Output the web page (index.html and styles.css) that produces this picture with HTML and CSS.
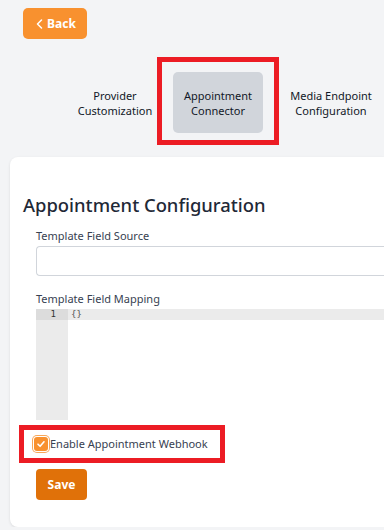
FILE: index.html
```html
<!DOCTYPE html>
<html lang="en">
<head>
    <meta charset="UTF-8">
    <meta name="viewport" content="width=device-width, initial-scale=1.0">
    <title>Appointment Connector</title>
    <link rel="stylesheet" href="styles.css">
</head>
<body>
    <header class="top">
        <button class="back-btn">
            <svg width="7" height="10" viewBox="0 0 7 10"><path d="M5.5 1 L1.5 5 L5.5 9" fill="none" stroke="#fff" stroke-width="1.5" stroke-linecap="round" stroke-linejoin="round"/></svg>
            Back
        </button>
    </header>

    <!-- tabs -->
    <nav class="tabs">
        <div class="tab">Provider<br>Customization</div>
        <div class="tab-mark">
            <div class="tab active">Appointment<br>Connector</div>
        </div>
        <div class="tab tab-wide">Media Endpoint<br>Configuration</div>
    </nav>

    <main class="card">
        <h1>Appointment Configuration</h1>

        <div class="field">
            <label for="source">Template Field Source</label>
            <input type="text" id="source">
        </div>

        <div class="field">
            <label>Template Field Mapping</label>
            <div class="editor">
                <div class="gutter">
                    <div class="line-no">1</div>
                </div>
                <div class="code">
                    <div class="code-line">{}</div>
                </div>
            </div>
        </div>

        <div class="check-mark">
            <label class="check">
                <span class="box">
                    <svg width="10" height="10" viewBox="0 0 10 10"><path d="M2 5.2 L4.1 7.3 L8 2.8" fill="none" stroke="#fff" stroke-width="1.6" stroke-linecap="round" stroke-linejoin="round"/></svg>
                </span>
                Enable Appointment Webhook
            </label>
        </div>

        <button class="save-btn">Save</button>
    </main>
</body>
</html>
```

FILE: styles.css
```css
body {
    font-family: "Noto Sans", "Open Sans", sans-serif;
    background-color: #f3f4f6;
    color: #111827;
    margin: 0;
    padding: 0;
}

.top {
    padding: 8px 0 0 23px;
}

.back-btn {
    width: 64px;
    height: 31px;
    display: flex;
    align-items: center;
    justify-content: center;
    gap: 4px;
    padding: 0 0 0 2px;
    background-color: #f8912f;
    color: white;
    border: none;
    border-radius: 5px;
    font-family: inherit;
    font-size: 12px;
    font-weight: bold;
    cursor: pointer;
}

.tabs {
    display: flex;
    align-items: flex-start;
    margin-top: 18px;
    padding-left: 69px;
}

.tab {
    width: 92px;
    margin: 15px -4px 0 0;
    height: 61px;
    display: flex;
    align-items: center;
    justify-content: center;
    text-align: center;
    font-size: 11px;
    line-height: 15px;
    color: #111827;
}

.tab-mark {
    border: 5px solid #ec1c24;
    padding: 10px 11px 7px;
}

.tab.active {
    width: 90px;
    margin: 0;
    background-color: #d1d5db;
    border-radius: 5px;
}

.tab-wide {
    width: 98px;
    margin-left: 3px;
    margin-right: 0;
}

.card {
    background-color: white;
    margin: 12px 0 0 10px;
    height: 370px;
    box-sizing: border-box;
    padding: 34px 0 0 13px;
    border-radius: 8px 0 0 8px;
    box-shadow: 0 1px 3px rgba(0, 0, 0, 0.1);
}

h1 {
    margin: 0 0 9px;
    font-size: 18.4px;
    line-height: 28px;
    font-weight: 500;
    color: #1f2937;
}

.field {
    padding-left: 13px;
    margin-bottom: 15px;
}

.field label {
    display: block;
    font-size: 11px;
    line-height: 16px;
    color: #374151;
    margin-bottom: 2px;
}

.field input {
    width: 100%;
    height: 30px;
    box-sizing: border-box;
    border: 1px solid #d1d5db;
    border-right: none;
    border-radius: 4px 0 0 4px;
}

.editor {
    display: flex;
    height: 111px;
    font-family: "DejaVu Sans Mono", monospace;
    font-size: 9px;
    line-height: 11px;
}

.gutter {
    width: 32px;
    background-color: #ebebeb;
}

.line-no {
    background-color: #dcdcdc;
    text-align: right;
    padding-right: 12px;
    color: #333;
}

.code {
    flex: 1;
}

.code-line {
    background-color: #ebebeb;
    padding-left: 3px;
    color: #555;
}

.check-mark {
    width: fit-content;
    border: 5px solid #ec1c24;
    margin: -10px 0 0 -4px;
    padding: 6px 12px 6px 10px;
}

.check {
    display: flex;
    align-items: center;
    font-size: 11px;
    line-height: 16px;
    color: #374151;
}

.box {
    width: 14px;
    height: 14px;
    margin-right: 2px;
    background-color: #f8912f;
    border-radius: 3px;
    box-shadow: 0 0 0 1px #fff, 0 0 0 2px #f8a75a;
    display: flex;
    align-items: center;
    justify-content: center;
}

.save-btn {
    display: block;
    margin: 6px 0 0 13px;
    width: 51px;
    height: 31px;
    background-color: #e07109;
    color: white;
    border: none;
    border-radius: 4px;
    font-family: inherit;
    font-size: 12px;
    font-weight: bold;
    cursor: pointer;
}
```
